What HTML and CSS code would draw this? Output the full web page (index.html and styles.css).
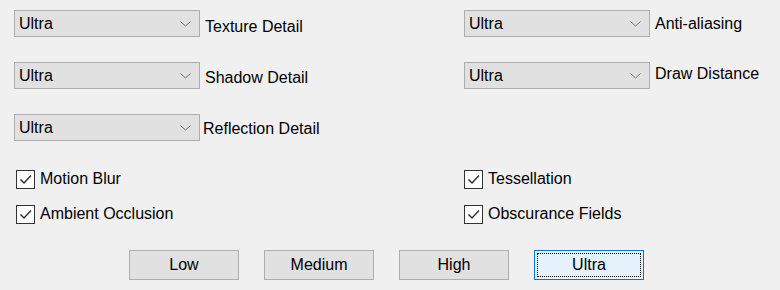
FILE: index.html
```html
<!DOCTYPE html>
<html lang="en">

<head>
    <meta charset="UTF-8">
    <title>Graphics Settings</title>
    <link rel="stylesheet" href="styles.css">
</head>

<body>
    <div class="panel">
        <div class="combos">
            <div class="row">
                <div class="combo"><span>Ultra</span><svg class="chev" width="11" height="6" viewBox="0 0 11 6"><path d="M0.5 0.5 L5.5 5 L10.5 0.5" /></svg></div>
                <span class="label low3">Texture Detail</span>
            </div>
            <div class="row">
                <div class="combo"><span>Ultra</span><svg class="chev" width="11" height="6" viewBox="0 0 11 6"><path d="M0.5 0.5 L5.5 5 L10.5 0.5" /></svg></div>
                <span class="label">Anti-aliasing</span>
            </div>
            <div class="row">
                <div class="combo"><span>Ultra</span><svg class="chev" width="11" height="6" viewBox="0 0 11 6"><path d="M0.5 0.5 L5.5 5 L10.5 0.5" /></svg></div>
                <span class="label low2">Shadow Detail</span>
            </div>
            <div class="row">
                <div class="combo"><span>Ultra</span><svg class="chev" width="11" height="6" viewBox="0 0 11 6"><path d="M0.5 0.5 L5.5 5 L10.5 0.5" /></svg></div>
                <span class="label high2">Draw Distance</span>
            </div>
            <div class="row">
                <div class="combo"><span>Ultra</span><svg class="chev" width="11" height="6" viewBox="0 0 11 6"><path d="M0.5 0.5 L5.5 5 L10.5 0.5" /></svg></div>
                <span class="label low1 tight">Reflection Detail</span>
            </div>
        </div>

        <div class="checks">
            <label class="check"><span class="box"><svg width="17" height="17" viewBox="0 0 17 17"><path d="M3.5 8.5 L7 12 L14 4.5" /></svg></span>Motion Blur</label>
            <label class="check"><span class="box"><svg width="17" height="17" viewBox="0 0 17 17"><path d="M3.5 8.5 L7 12 L14 4.5" /></svg></span>Tessellation</label>
            <label class="check"><span class="box"><svg width="17" height="17" viewBox="0 0 17 17"><path d="M3.5 8.5 L7 12 L14 4.5" /></svg></span>Ambient Occlusion</label>
            <label class="check"><span class="box"><svg width="17" height="17" viewBox="0 0 17 17"><path d="M3.5 8.5 L7 12 L14 4.5" /></svg></span>Obscurance Fields</label>
        </div>

        <div class="buttons">
            <button class="btn">Low</button>
            <button class="btn">Medium</button>
            <button class="btn">High</button>
            <button class="btn active"><span class="focus">Ultra</span></button>
        </div>
    </div>
</body>

</html>
```

FILE: styles.css
```css
body {
    margin: 0;
    background-color: #f0f0f0;
    font-family: "Liberation Sans", Arial, sans-serif;
    font-size: 16px;
    color: #000;
}

.panel {
    width: 780px;
    height: 290px;
    padding-top: 10px;
    box-sizing: border-box;
}

.combos {
    display: grid;
    grid-template-columns: 450px 1fr;
    row-gap: 25px;
    padding-left: 14px;
}

.row {
    display: flex;
    align-items: center;
    height: 27px;
}

.combo {
    width: 186px;
    height: 27px;
    box-sizing: border-box;
    border: 1px solid #adadad;
    background-color: #e1e1e1;
    display: flex;
    align-items: center;
    justify-content: space-between;
    padding: 0 8px 0 4px;
}

.chev path {
    fill: none;
    stroke: #6d6d6d;
    stroke-width: 1;
}

.label {
    margin-left: 5px;
    position: relative;
}

.label.tight {
    margin-left: 3px;
}

.low3 { top: 3px; }
.low2 { top: 2px; }
.low1 { top: 1px; }
.high2 { top: -2px; }

.checks {
    display: grid;
    grid-template-columns: 448px 1fr;
    row-gap: 15px;
    padding-left: 16px;
    margin-top: 28px;
}

.check {
    display: flex;
    align-items: center;
    height: 20px;
}

.box {
    width: 19px;
    height: 19px;
    box-sizing: border-box;
    border: 1px solid #333;
    background-color: #fff;
    margin-right: 5px;
    display: flex;
}

.box path {
    fill: none;
    stroke: #333;
    stroke-width: 1.5;
}

.buttons {
    display: flex;
    gap: 25px;
    padding-left: 129px;
    margin-top: 26px;
}

.btn {
    width: 110px;
    height: 30px;
    border: 1px solid #adadad;
    background-color: #e1e1e1;
    font-family: inherit;
    font-size: 16px;
    color: #000;
    padding: 0;
}

.btn.active {
    border-color: #0078d7;
    background-color: #e5f1fb;
    padding: 2px;
}

.focus {
    display: flex;
    align-items: center;
    justify-content: center;
    height: 100%;
    border: 1px dotted #000;
    box-sizing: border-box;
}
```
